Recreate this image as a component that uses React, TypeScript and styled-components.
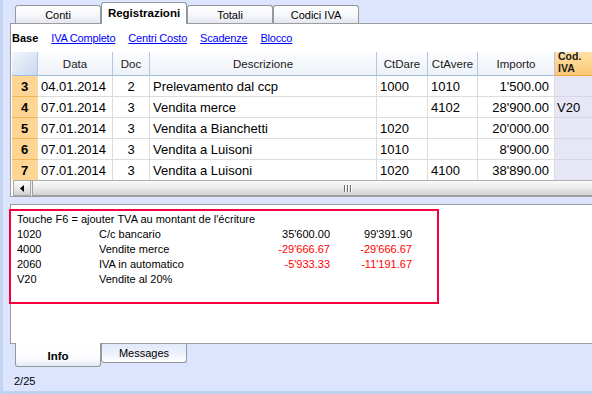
import React from 'react'
import styled, { createGlobalStyle, css } from 'styled-components'

type Align = 'left' | 'center' | 'right'

const columns = [26, 75, 37, 227, 51, 50, 77, 70]
const template = columns.map((w) => `${w}px`).join(' ')

const headers: { label: string; align: Align }[] = [
  { label: 'Data', align: 'center' },
  { label: 'Doc', align: 'center' },
  { label: 'Descrizione', align: 'center' },
  { label: 'CtDare', align: 'center' },
  { label: 'CtAvere', align: 'center' },
  { label: 'Importo', align: 'center' },
]

const rows = [
  { n: 3, data: '04.01.2014', doc: '2', desc: 'Prelevamento dal ccp', dare: '1000', avere: '1010', imp: "1'500.00", iva: '' },
  { n: 4, data: '07.01.2014', doc: '3', desc: 'Vendita merce', dare: '', avere: '4102', imp: "28'900.00", iva: 'V20' },
  { n: 5, data: '07.01.2014', doc: '3', desc: 'Vendita a Bianchetti', dare: '1020', avere: '', imp: "20'000.00", iva: '' },
  { n: 6, data: '07.01.2014', doc: '3', desc: 'Vendita a Luisoni', dare: '1010', avere: '', imp: "8'900.00", iva: '' },
  { n: 7, data: '07.01.2014', doc: '3', desc: 'Vendita a Luisoni', dare: '1020', avere: '4100', imp: "38'890.00", iva: '' },
]

const infoLines = [
  { code: '1020', desc: 'C/c bancario', a: "35'600.00", b: "99'391.90", neg: false },
  { code: '4000', desc: 'Vendite merce', a: "-29'666.67", b: "-29'666.67", neg: true },
  { code: '2060', desc: 'IVA in automatico', a: "-5'933.33", b: "-11'191.67", neg: true },
  { code: 'V20', desc: 'Vendite al 20%', a: '', b: '', neg: false },
]

const GlobalStyle = createGlobalStyle`
  html, body {
    margin: 0;
    padding: 0;
  }
  body {
    width: 592px;
    height: 394px;
    overflow: hidden;
    background: #dce5fd;
    font-family: 'Liberation Sans', Arial, sans-serif;
    font-size: 11px;
    color: #000;
  }
  * {
    box-sizing: border-box;
  }
`

const Window = styled.div`
  width: 592px;
  height: 394px;
  display: flex;
  flex-direction: column;
  border-left: 3px solid #c3d4f1;
  border-bottom: 3px solid #bfd2f0;
  padding-left: 7px;
  overflow: hidden;
  background: #dce5fd;
`

const TopTabBar = styled.div`
  height: 23px;
  flex: none;
  display: flex;
  align-items: flex-end;
  padding-left: 5px;
`

const TopTab = styled.div<{ $active?: boolean }>`
  width: 86px;
  height: 18px;
  border: 1px solid #919b9c;
  border-bottom: none;
  border-radius: 3px 3px 0 0;
  background: linear-gradient(#ffffff, #f6f7fa 55%, #e4e7f0);
  display: flex;
  align-items: center;
  justify-content: center;
  font-size: 11px;
  ${(p) =>
    p.$active &&
    css`
      height: 22px;
      margin-bottom: -1px;
      padding-bottom: 2px;
      background: #fff;
      font-weight: bold;
      font-size: 11.5px;
      position: relative;
      z-index: 1;
    `}
`

const GridPanel = styled.div`
  height: 174px;
  flex: none;
  margin-right: -80px;
  border: 1px solid #9c9c9c;
  border-right: none;
  background: #fff;
  display: flex;
  flex-direction: column;
`

const LinkBar = styled.div`
  height: 28px;
  display: flex;
  align-items: center;
  gap: 13px;
  padding-left: 1px;
  font-size: 11px;
  letter-spacing: -0.2px;
`

const BaseLabel = styled.span`
  font-weight: bold;
  letter-spacing: 0;
`

const Link = styled.a`
  color: #0000ff;
  text-decoration: underline;
`

const Grid = styled.div`
  margin-left: 1px;
`

const HeaderRow = styled.div`
  display: grid;
  grid-template-columns: ${template};
  height: 24px;
`

const HeadCell = styled.div<{ $kind?: 'corner' | 'iva' }>`
  display: flex;
  align-items: center;
  justify-content: center;
  font-size: 11.5px;
  color: #1a1a1a;
  background: linear-gradient(#fbfcfe, #eef2f8);
  border-right: 1px solid #b3c8e0;
  border-bottom: 1px solid #a3bcd8;
  white-space: nowrap;
  ${(p) =>
    p.$kind === 'corner' &&
    css`
      background: linear-gradient(135deg, #f2f6fc, #c9d8ef);
    `}
  ${(p) =>
    p.$kind === 'iva' &&
    css`
      flex-direction: column;
      align-items: flex-start;
      justify-content: flex-end;
      overflow: hidden;
      font-size: 10.5px;
      font-weight: bold;
      line-height: 12px;
      padding: 0 0 1px 3px;
      background: linear-gradient(#fee2a8, #fbc772);
      border-bottom: 1px solid #eda64b;
      border-right: none;
    `}
`

const RowsClip = styled.div`
  height: 104px;
  overflow: hidden;
`

const DataRow = styled.div`
  display: grid;
  grid-template-columns: ${template};
  height: 21px;
  font-size: 13px;
`

const Cell = styled.div<{ $align?: Align; $kind?: 'num' | 'iva' }>`
  display: flex;
  align-items: center;
  justify-content: ${(p) =>
    p.$align === 'right' ? 'flex-end' : p.$align === 'center' ? 'center' : 'flex-start'};
  padding: ${(p) => (p.$align === 'right' ? '0 5px 0 0' : p.$align === 'center' ? '0' : '0 0 0 3px')};
  border-right: 1px solid #dcdcdc;
  border-bottom: 1px solid #dcdcdc;
  white-space: nowrap;
  overflow: hidden;
  ${(p) =>
    p.$kind === 'num' &&
    css`
      font-weight: bold;
      background: #fed592;
      border-bottom-color: #f4b45a;
      border-right-color: #f1dcb6;
    `}
  ${(p) =>
    p.$kind === 'iva' &&
    css`
      background: #e6e6f5;
      border-right: none;
      border-bottom-color: #d6d6e8;
      padding-left: 2px;
    `}
`

const ScrollBar = styled.div`
  height: 16px;
  margin-left: 2px;
  display: flex;
  gap: 1px;
  background: #eeeeee;
  border-top: 1px solid #b0b0b0;
  overflow: hidden;
`

const ScrollButton = styled.div`
  width: 18px;
  flex: none;
  display: flex;
  align-items: center;
  justify-content: center;
  background: linear-gradient(#fbfbfb, #e6e6e6 60%, #cfcfcf);
  border: 1px solid #a8a8a8;
  border-top: none;
`

const ScrollThumb = styled.div`
  width: 630px;
  flex: none;
  display: flex;
  align-items: center;
  justify-content: center;
  gap: 2px;
  background: linear-gradient(#fafafa, #ebebeb 50%, #d2d2d2);
  border: 1px solid #a0a0a0;
  border-top: none;
`

const Grip = styled.span`
  width: 1px;
  height: 7px;
  background: #6f6f6f;
  box-shadow: 1px 0 0 #fff;
`

const InfoPanel = styled.div`
  height: 140px;
  flex: none;
  margin-top: 7px;
  margin-right: -80px;
  border: 1px solid #9c9c9c;
  border-right: none;
  background: #fff;
  padding-top: 4px;
`

const InfoBox = styled.div`
  width: 430px;
  height: 95px;
  margin-left: -2px;
  border: 2px solid #f5003c;
  padding: 1px 0 0 6px;
  font-size: 11px;
  line-height: 15px;
`

const InfoLine = styled.div`
  display: grid;
  grid-template-columns: 82px 150px 81px 82px;
  white-space: nowrap;
`

const Amount = styled.span<{ $neg?: boolean }>`
  text-align: right;
  color: ${(p) => (p.$neg ? '#ff0000' : '#000')};
`

const BottomTabBar = styled.div`
  height: 23px;
  flex: none;
  display: flex;
  align-items: flex-start;
  padding-left: 5px;
`

const BottomTab = styled.div<{ $active?: boolean }>`
  width: 86px;
  height: 19px;
  border: 1px solid #919b9c;
  border-top: none;
  border-radius: 0 0 3px 3px;
  background: linear-gradient(#e2e9fb, #eef2fc 60%, #ffffff);
  display: flex;
  align-items: center;
  justify-content: center;
  font-size: 11px;
  ${(p) =>
    p.$active &&
    css`
      height: 24px;
      margin-top: -1px;
      padding-top: 2px;
      background: linear-gradient(#ffffff, #fbfcfe 65%, #e3eaf8);
      font-weight: bold;
      font-size: 11.5px;
      position: relative;
      z-index: 1;
    `}
`

const StatusBar = styled.div`
  height: 24px;
  flex: none;
  display: flex;
  align-items: center;
  padding: 4px 0 0 4px;
  font-size: 11px;
`

const ArrowLeft = () => (
  <svg width="5" height="7" viewBox="0 0 5 7">
    <path d="M4 0 L0 3.5 L4 7 Z" fill="#000" />
  </svg>
)

const App = () => {
  return (
    <>
      <GlobalStyle />
      <Window>
        <TopTabBar>
          <TopTab>Conti</TopTab>
          <TopTab $active>Registrazioni</TopTab>
          <TopTab>Totali</TopTab>
          <TopTab>Codici IVA</TopTab>
        </TopTabBar>

        <GridPanel>
          <LinkBar>
            <BaseLabel>Base</BaseLabel>
            <Link>IVA Completo</Link>
            <Link>Centri Costo</Link>
            <Link>Scadenze</Link>
            <Link>Blocco</Link>
          </LinkBar>

          <Grid>
            <HeaderRow>
              <HeadCell $kind='corner' />
              {headers.map((h) => (
                <HeadCell key={h.label}>{h.label}</HeadCell>
              ))}
              <HeadCell $kind='iva'>
                <span>Cod.</span>
                <span>IVA</span>
              </HeadCell>
            </HeaderRow>
            <RowsClip>
              {rows.map((r) => (
                <DataRow key={r.n}>
                  <Cell $kind='num' $align='center'>{r.n}</Cell>
                  <Cell>{r.data}</Cell>
                  <Cell $align='center'>{r.doc}</Cell>
                  <Cell>{r.desc}</Cell>
                  <Cell>{r.dare}</Cell>
                  <Cell>{r.avere}</Cell>
                  <Cell $align='right'>{r.imp}</Cell>
                  <Cell $kind='iva'>{r.iva}</Cell>
                </DataRow>
              ))}
            </RowsClip>
          </Grid>

          <ScrollBar>
            <ScrollButton>
              <ArrowLeft />
            </ScrollButton>
            <ScrollThumb>
              <Grip />
              <Grip />
              <Grip />
            </ScrollThumb>
          </ScrollBar>
        </GridPanel>

        <InfoPanel>
          <InfoBox>
            <div>Touche F6 = ajouter TVA au montant de l'écriture</div>
            {infoLines.map((l) => (
              <InfoLine key={l.code}>
                <span>{l.code}</span>
                <span>{l.desc}</span>
                <Amount $neg={l.neg}>{l.a}</Amount>
                <Amount $neg={l.neg}>{l.b}</Amount>
              </InfoLine>
            ))}
          </InfoBox>
        </InfoPanel>

        <BottomTabBar>
          <BottomTab $active>Info</BottomTab>
          <BottomTab>Messages</BottomTab>
        </BottomTabBar>

        <StatusBar>2/25</StatusBar>
      </Window>
    </>
  )
}

export default App
